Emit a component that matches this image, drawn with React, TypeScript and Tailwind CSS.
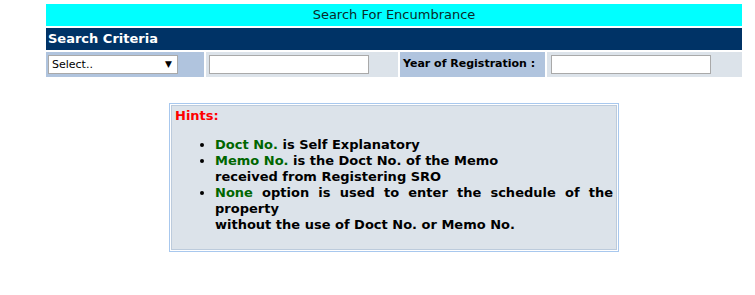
import React from "react";

const font = { fontFamily: '"DejaVu Sans", Verdana, sans-serif' };

export default function App() {
  return (
    <div className="min-h-[295px] bg-white pt-[4px] font-['DejaVu_Sans',Verdana,sans-serif]">
      <div className="ml-[46px] w-[696px]">
        {/* title bar */}
        <div className="h-[22px] bg-[#00ffff] text-center text-[13px] leading-[22px] text-[#0a2a2a]">
          Search For Encumbrance
        </div>

        {/* section header */}
        <div className="mt-[2px] h-[22px] bg-[#003366] pl-[2px] text-[13px] font-bold leading-[22px] text-white">
          Search Criteria
        </div>

        {/* criteria row */}
        <div className="mt-[2px] flex h-[25px] gap-[2px]">
          <div className="flex w-[158px] items-center bg-[#b0c4de] pl-[2px]">
            <div className="relative h-[19px] w-[130px]">
              <select className="block h-[19px] w-[130px] appearance-none border border-[#a9a9a9] bg-white py-0 pl-[3px] text-[11px] leading-[17px] text-black outline-none">
                <option>Select..</option>
              </select>
              <span className="pointer-events-none absolute right-[6px] top-[3px] text-[9px] leading-[12px] text-black">
                ▼
              </span>
            </div>
          </div>
          <div className="flex w-[192px] items-center bg-[#dce3ea] pl-[3px]">
            <input className="block h-[19px] w-[160px] border border-[#a9a9a9] bg-white outline-none" />
          </div>
          <div className="flex w-[145px] items-center bg-[#b0c4de] pl-[3px] text-[11px] font-bold text-black">
            Year of Registration :
          </div>
          <div className="flex flex-1 items-center bg-[#dce3ea] pl-[4px]">
            <input className="block h-[19px] w-[160px] border border-[#a9a9a9] bg-white outline-none" />
          </div>
        </div>
      </div>

      {/* hints */}
      <div className="ml-[169px] mt-[26px] w-[450px] border border-[#a8c8ee] bg-white p-[1px]" style={font}>
        <div className="border border-[#bccbdc] bg-[#dce3ea] pb-[3px] pl-[3px] pr-[3px] pt-[2px] text-[13px] font-bold leading-[16px] text-black">
          <div className="text-[#ff0000]">Hints:</div>
          <ul className="my-[13px] list-disc pl-[40px] text-justify">
            <li>
              <span className="text-[#006600]">Doct No.</span> is Self Explanatory
            </li>
            <li>
              <span className="text-[#006600]">Memo No.</span> is the Doct No. of the Memo
              <br />
              received from Registering SRO
            </li>
            <li>
              <span className="text-[#006600]">None</span> option is used to enter the schedule of the property
              <br />
              without the use of Doct No. or Memo No.
            </li>
          </ul>
        </div>
      </div>
    </div>
  );
}
